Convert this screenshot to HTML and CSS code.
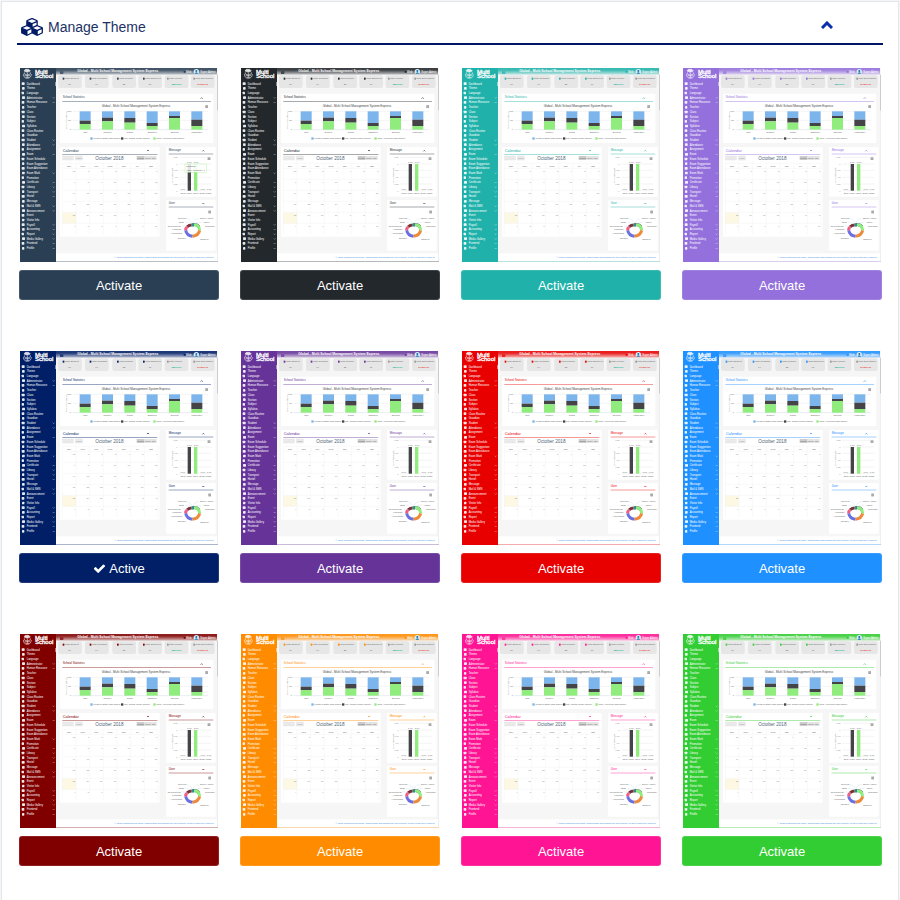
FILE: index.html
```html
<!DOCTYPE html>
<html lang="en">
<head>
<meta charset="utf-8">
<title>Manage Theme</title>
<link rel="stylesheet" href="styles.css">
</head>
<body>
<main class="panel">
  <header class="panel-head">
    <h1 class="title">
      <svg class="cubes" viewBox="0 0 2176 1792" aria-hidden="true"><path d="M640 1632l384-192v-314l-384 164v342zM576 1178l404-173-404-173-404 173zM1664 1632l384-192v-314l-384 164v342zM1600 1178l404-173-404-173-404 173zM1152 871l384-165v-266l-384 164v267zM1088 492l441-189-441-189-441 189zM2176 1024v416q0 36-19 67t-52 47l-448 224q-25 14-57 14t-57-14l-448-224q-4-2-7-4-2 2-7 4l-448 224q-25 14-57 14t-57-14l-448-224q-33-16-52-47t-19-67v-416q0-38 21.500-70t56.500-48l434-186v-400q0-38 21.500-70t56.500-48l448-192q23-10 50-10t50 10l448 192q35 16 56.500 48t21.500 70v400l434 186q36 16 57 48t21 70z"/></svg>
      Manage Theme
    </h1>
    <button class="collapse" type="button" aria-label="Collapse">
      <svg viewBox="0 0 12 8" aria-hidden="true"><path d="M1 7 6 2 11 7"/></svg>
    </button>
  </header>
  <section class="themes" id="themes"></section>
</main>
<script src="themes.js"></script>
</body>
</html>
```
FILE: styles.css
```css
* { box-sizing: border-box; }
body {
  margin: 0;
  background: #f3f5f6;
  font-family: "Liberation Sans", Arial, sans-serif;
  color: #001f67;
}
.panel {
  margin: 1px 1px 0;
  padding: 0 15px 35px;
  min-height: 100vh;
  background: #fff;
  border: 1px solid #e3e7eb;
  border-bottom: 0;
}
.panel-head {
  display: flex;
  align-items: center;
  justify-content: space-between;
  height: 43px;
  padding: 8px 50px 0 4px;
  border-bottom: 2px solid #001566;
}
.title {
  display: flex;
  align-items: center;
  gap: 5px;
  margin: 0;
  font-size: 14px;
  font-weight: 400;
  line-height: 20px;
  color: #1c3266;
}
.cubes { width: 22px; height: 18px; fill: #001a66; }
.collapse {
  display: flex;
  padding: 0 0 4px;
  border: 0;
  background: none;
  color: #0a2fae;
}
.collapse svg { width: 12px; height: 8px; fill: none; stroke: currentColor; stroke-width: 3; }
.themes {
  display: grid;
  grid-template-columns: repeat(4, 1fr);
  gap: 51px 21px;
  padding: 23px 1px 0 2px;
}
.card { display: flex; flex-direction: column; gap: 8px; }
.shot { display: block; width: 100%; padding: 0 1px; }
.shot text { font-family: "Liberation Sans", Arial, sans-serif; font-size: 7px; fill: #666; }
.shot .fade { fill: #999; }
.shot .menu { font-size: 8px; fill: #fff; }
.shot .logo { font-size: 18px; fill: #fff; stroke: #fff; }
.shot .bar-title { font-size: 10px; font-weight: 700; fill: #fff; }
.shot .head { font-size: 9px; fill: currentColor; }
.shot .cal { font-size: 12px; fill: currentColor; }
.shot .month { font-size: 14px; fill: #4f6478; }
.shot .chart { font-size: 9px; fill: #444; }
.shot .mid { text-anchor: middle; }
.shot .end { text-anchor: end; }
.shot .foot { fill: #3c8dde; text-anchor: end; }
.shot .income { fill: #1abb9c; font-weight: 700; }
.shot .expense { fill: #e74c3c; font-weight: 700; }
.activate {
  height: 30px;
  padding: 1px 0 0;
  border: 1px solid rgba(255, 255, 255, .12);
  border-radius: 3px;
  color: #fff;
  font: 13px/27px "Liberation Sans", Arial, sans-serif;
}
.activate svg { width: 13px; height: 13px; margin-right: 3px; vertical-align: -2px; fill: #fff; }

.slate { color: #2a3f54; } .slate .activate { background-color: #2a3f54; }
.black { color: #23282d; } .black .activate { background-color: #23282d; }
.sea { color: #20b2aa; } .sea .activate { background-color: #20b2aa; }
.lilac { color: #9370db; } .lilac .activate { background-color: #9370db; }
.navy { color: #001f67; } .navy .activate { background-color: #001f67; }
.purple { color: #663399; } .purple .activate { background-color: #663399; }
.red { color: #e80000; } .red .activate { background-color: #e80000; }
.blue { color: #1e90ff; } .blue .activate { background-color: #1e90ff; }
.maroon { color: #800000; } .maroon .activate { background-color: #800000; }
.orange { color: #ff8c00; } .orange .activate { background-color: #ff8c00; }
.pink { color: #ff1493; } .pink .activate { background-color: #ff1493; }
.green { color: #32cd32; } .green .activate { background-color: #32cd32; }
.card .activate { color: #fff; }
```
FILE: themes.js
```js
const themes = ["slate", "black", "sea", "lilac", "navy", "purple", "red", "blue", "maroon", "orange", "pink", "green"];
const active = "navy";

// A trailing "+" marks a menu entry with a submenu.
const menu = ["Dashboard", "Theme", "Language", "Administrator+", "Human Resource+", "Teacher", "Class", "Section",
  "Subject", "Syllabus", "Class Routine", "Guardian", "Student+", "Attendance+", "Assignment", "Exam+",
  "Exam Schedule", "Exam Suggestion", "Exam Attendance", "Exam Mark+", "Promotion", "Certificate+", "Library+",
  "Transport+", "Hostel+", "Message", "Mail & SMS+", "Announcement+", "Event", "Visitor Info", "Payroll+",
  "Accounting+", "Report+", "Media Gallery+", "Frontend+", "Profile+"];

const rect = (x, y, w, h, fill, extra = "") => `<rect x="${x}" y="${y}" width="${w}" height="${h}" fill="${fill}" ${extra}/>`;
const text = (x, y, cls, value) => `<text x="${x}" y="${y}" class="${cls}">${value.replace("&", "&amp;")}</text>`;
const line = (d, stroke, w = 1) => `<path d="${d}" fill="none" stroke="${stroke}" stroke-width="${w}"/>`;
const burger = (x, y) => rect(x, y, 8, 8, "#888") + line(`M${x} ${y + 3}h8m-8 3h8`, "#fff");

function sidebar() {
  let out = rect(20, 30, 108, 582, "currentColor");
  out += `<g fill="none" stroke="#fff" stroke-width="2" opacity=".85"><path d="M32 39 36 34H46L51 39 42 43Z" fill="#fff"/><path d="M33 43v5q9 6 18 0v-5M30 48q1 13 12 13t12-13M34 53h16M37 58h10M42 45v14"/></g>`;
  out += text(65, 47, "logo", "Multi") + text(65, 61, "logo", "School");
  out += rect(126, 72, 2, 12, "#fff", 'opacity=".7"');
  menu.forEach((entry, i) => {
    const y = 77 + Math.round(i * 14.1);
    out += rect(25 + i % 2, y - 4, 9 - i % 3, 8, "#fff", 'rx="2" opacity=".9"');
    out += text(40, y + 3, "menu", entry.replace("+", ""));
    if (entry.endsWith("+")) out += line(`M118 ${y - 1}l3 3 3-3`, "#fff");
  });
  return out;
}

function topbar(id) {
  let out = `<linearGradient id="bar-${id}" x2="0" y2="1"><stop offset=".3" stop-color="currentColor" stop-opacity=".88"/><stop offset="1" stop-color="currentColor" stop-opacity=".25"/></linearGradient>`;
  out += rect(128, 30, 483, 20, `url(#bar-${id})`) + rect(140, 40, 10, 8, "currentColor", 'opacity=".7"');
  out += text(192, 42, "bar-title", "Global - Multi School Management System Express");
  out += rect(511, 39, 6, 5, "currentColor") + text(518, 45, "menu", "Web");
  out += `<circle cx="549" cy="41" r="8" fill="#d9edf7"/><circle cx="549" cy="39" r="3" fill="#1673ac"/><path d="M543 47q6-9 12 0z" fill="#1673ac"/>`;
  return out + text(561, 44, "menu", "Super Admin");
}

function tiles() {
  const data = [["Total Student", "34", 134], ["Total Guardian", "14", 215], ["Total Teacher", "28", 297],
    ["Total Employee", "17", 375], ["Total Income", "38210.00", 454], ["Total Expenditure", "277500.00", 533]];
  return data.map(([label, value, x], i) => rect(x, 52, 71, 38, "#e6e6e6", 'rx="6"')
    + rect(x + (i < 4 ? 14 : 7), 59, 5, 6, i < 4 ? "currentColor" : "#999") + text(x + (i < 4 ? 21 : 13), 64, "", label)
    + text(x + 35, 81, "mid " + (["", "", "", "", "income", "expense"][i]), value)).join("");
}

function statistics() {
  let out = rect(140, 107, 460, 148, "#fff", 'rx="3"') + text(148, 121, "head", "School Statistics");
  out += rect(147, 129, 446, 2, "currentColor", 'opacity=".6"') + line("M562 122l3-3 3 3", "currentColor", 2);
  out += text(265, 147, "chart", "Global - Multi School Management System Express") + burger(576, 142);
  out += text(162, 162, "", "100") + text(165, 190, "", "50") + text(169, 216, "", "0");
  out += `<text class="fade" transform="translate(160 213) rotate(-90)">Total of Students</text>`;
  out += line("M178 160h406M178 187h406", "#ddd") + line("M178 215h406", "#b8c4d8");
  const names = ["One", "Nursery", "Game", "Eighteen", "Second", "Laboratory"];
  [[188, 198], [179, 190], [180, 194], [195, 204], [174, 180], [185, 204]].forEach(([dark, light], i) => {
    const x = 199 + i * 67;
    out += rect(x, 160, 33, dark - 160, "#7cb5ec") + rect(x, dark, 33, light - dark, "#434348") + rect(x, light, 33, 215 - light, "#90ed7d");
    out += text(x + 17, 225, "mid", names[i]);
  });
  out += rect(231, 238, 7, 7, "#7cb5ec") + text(240, 244, "", "Western State high school");
  out += rect(323, 238, 7, 7, "#434348") + text(332, 244, "", "City Global model school");
  return out + rect(420, 238, 7, 7, "#90ed7d") + text(429, 244, "", "Ideal American high school");
}

function calendar() {
  let out = rect(140, 267, 299, 269, "#fff", 'rx="3"') + text(148, 281, "cal", "Calendar");
  out += rect(147, 288, 285, 2, "currentColor", 'opacity=".6"') + line("M401 279l3-3 3 3", "currentColor", 2);
  out += [[148, 15], [165, 15], [187, 20]].map(([x, w]) => rect(x, 294, w, 12, "#ececec", 'stroke="#d5d5d5"')).join("");
  out += text(154, 302, "", "‹") + text(171, 302, "", "›") + text(189, 302, "fade", "today");
  out += text(246, 305, "month", "October 2018");
  out += rect(370, 294, 24, 12, "#ccc") + rect(394, 294, 36, 12, "#e4e4e4");
  out += text(372, 302, "", "month") + text(396, 302, "", "week") + text(416, 302, "", "day");
  out += rect(147, 464, 41, 32, "#fcf8e3");
  for (let i = 0; i < 8; i++) out += line(`M${147 + i * 41} 316V529`, "#eee");
  for (let r = 0; r < 7; r++) out += line(`M147 ${r ? 298 + r * 33 : 316}H434`, "#eee");
  ["Sun", "Mon", "Tue", "Wed", "Thu", "Fri", "Sat"].forEach((day, c) => { out += text(167 + c * 41, 326, "mid", day); });
  for (let i = 0; i < 42; i++) {
    const day = i < 1 ? 30 : i < 32 ? i : i - 31;
    out += text(186 + i % 7 * 41, 341 + Math.floor(i / 7) * 33, "end fade", String(day));
  }
  return out;
}

function message(first) {
  let out = rect(458, 267, 149, 149, "#fff", 'rx="3"') + text(466, 278, "head", "Message");
  out += rect(466, 287, 134, 2, "currentColor", 'opacity=".6"') + line("M567 280l3-3 3 3", "currentColor", 2) + burger(583, 298);
  [["1.25", 298], ["1", 318], ["0.75", 337], ["0.5", 358], ["0.25", 378], ["0", 398]].forEach(([n, y]) => {
    out += text(493, y + 3, "end fade", n) + line(`M498 ${y}h96`, "#ddd");
  });
  out += `<text class="fade" transform="translate(478 374) rotate(-90)">Total Message</text>`;
  out += rect(523, 318, 10, 80, "#434348") + rect(542, 318, 10, 80, "#90ed7d");
  out += text(521, 315, "", "1.00") + text(541, 315, "", "1.00");
  [505, 565, 584].forEach(x => { out += text(x + 3, 395, "mid", "0.00"); });
  ["New", "Inbox", "Sent", "Draft", "Trash"].forEach((n, i) => { out += text(509 + i * 19, 408, "mid", n); });
  if (first) out += rect(515, 318, 64, 25, "#fff", 'fill-opacity=".85" stroke="#90ed7d"') + text(519, 328, "", "Message") + text(519, 338, "", "Inbox Message: 1");
  return out;
}

function users() {
  let out = rect(458, 426, 149, 152, "#fff", 'rx="3"') + text(466, 438, "head", "User");
  out += rect(466, 446, 134, 2, "currentColor", 'opacity=".6"') + line("M567 438l3-3 3 3", "currentColor", 2) + burger(585, 458);
  [["M537 500Q550 497 557 507", "#434348"], ["M542 500Q557 499 559 517", "#90ed7d"], ["M559 517Q556 532 537 535", "#ed8b3c"],
    ["M537 535Q520 533 517 517", "#6a70e0"], ["M517 517Q517 510 522 506", "#f15c80"], ["M522 506Q528 501 535 501", "#7a2f35"],
    ["M535 501h7", "#2b908f"]].forEach(([d, color]) => { out += line(d, color, 9); });
  [[494, 484, "General"], [497, 495, "Staff"], [463, 506, "Receptionist"], [477, 517, "Librarian"], [471, 528, "Accountant"],
    [493, 544, "Teacher"], [560, 484, "Super Admin"], [568, 495, "Admin"], [575, 506, "Guardian"], [561, 545, "Student"]]
    .forEach(([x, y, n]) => { out += text(x, y, "", n); });
  return out + line("M519 482q14 1 17 15M516 493q12 0 14 6M506 504q10-1 16 4M556 482q-15 1-17 15M564 493q-16 0-20 6", "#b9dcec");
}

function screenshot(id) {
  return `<svg class="shot" viewBox="20 30 594 582" role="img" aria-label="${id} theme preview">`
    + rect(20, 30, 594, 582, "#f6f6f6") + sidebar() + topbar(id) + tiles() + statistics() + calendar()
    + message(id === "slate") + users() + rect(128, 586, 486, 23, "#fff")
    + text(602, 600, "foot", "© 2018 Codetroopers Team. Trademarks and brands are the property of their respective owners.")
    + rect(128, 609, 486, 3, "currentColor", 'opacity=".3"') + rect(611, 50, 3, 108, "#ccc") + rect(611, 158, 3, 451, "#eee") + `</svg>`;
}

const check = '<svg viewBox="0 0 1792 1792" aria-hidden="true"><path d="M1671 566q0 40-28 68l-724 724-136 136q-28 28-68 28t-68-28l-136-136-362-362q-28-28-28-68t28-68l136-136q28-28 68-28t68 28l294 295 656-657q28-28 68-28t68 28l136 136q28 28 28 68z"/></svg>';

document.getElementById("themes").innerHTML = themes.map(id => `
  <article class="card ${id}">
    ${screenshot(id)}
    <button class="activate" type="button">${id === active ? check + "Active" : "Activate"}</button>
  </article>`).join("");
```
